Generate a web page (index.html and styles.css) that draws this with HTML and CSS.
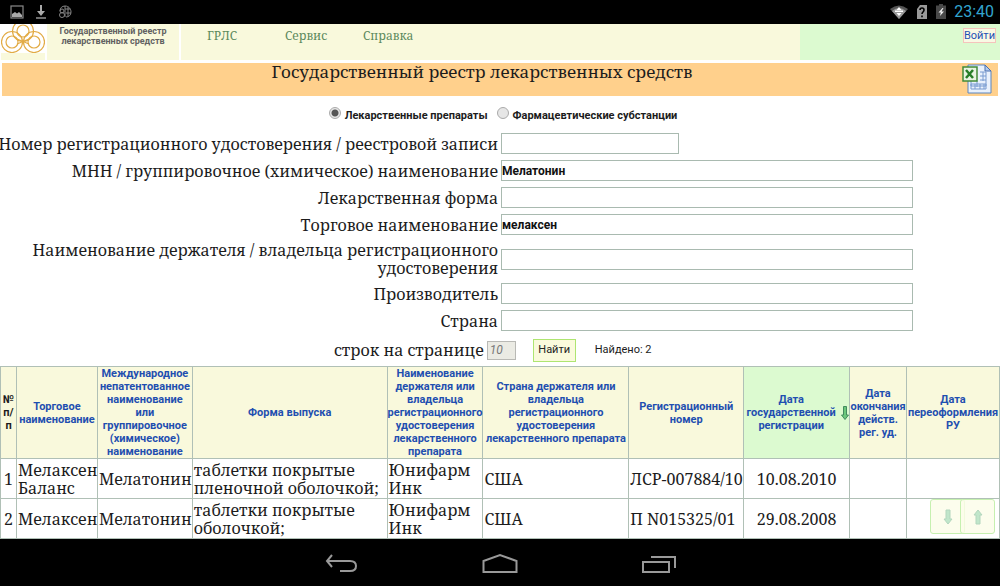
FILE: index.html
```html
<!DOCTYPE html>
<html lang="ru">
<head>
<meta charset="utf-8">
<title>Государственный реестр лекарственных средств</title>
<link rel="stylesheet" href="styles.css">
</head>
<body>
<div class="status-bar">
  <div class="status-group status-left">
    <svg width="14" height="14" viewBox="0 0 14 14"><rect x="1" y="1" width="12" height="12" fill="none" stroke="#8a8a8a" stroke-width="1.2"/><path d="M2 12V9l3-2 2 1.5L9 7l3 3v2z" fill="#aaa"/></svg>
    <svg width="12" height="14" viewBox="0 0 12 14"><path d="M5 0h2v6h3l-4 5-4-5h3z" fill="#aaa"/><path d="M1 13h10" stroke="#aaa" stroke-width="1.3"/></svg>
    <svg width="14" height="14" viewBox="0 0 14 14" fill="none" stroke="#858585"><path d="M2 6C2 3 4 1 7 1c4 0 6 3 6 6s-2 5-5 5M7 1v11M7 4h5M8 8h5M10 2v9"/><circle cx="4" cy="6" r="2"/><circle cx="4" cy="10" r="2.5"/></svg>
  </div>
  <div class="status-group">
    <svg width="20" height="16" viewBox="0 0 20 16"><path d="M1 5Q10-2 19 5L10 15z" fill="#555"/><path d="M3 7Q10 1 17 7L10 15z" fill="#999"/><path d="M10 3l2.500 3h-5zM10 12L7.500 9h5zM6 6.500h8v1.500H6z" fill="#fff"/></svg>
    <svg width="12" height="16" viewBox="0 0 12 16"><path d="M4 1h7v14H1V5z" fill="#999"/><path d="M4 6q0-2 2-2t2 2q0 1-1 2t-1 2M6 11.500v1.800" fill="none" stroke="#000" stroke-width="1.600"/></svg>
    <svg width="12" height="16" viewBox="0 0 12 16"><path d="M4 0h4v1.500h3V15H1V1.500h3z" fill="#484848"/><path d="M7.500 4L3.500 8.500h2.300L5 12l4-4.500H6.500L8.500 4z" fill="#eee"/></svg>
    <time class="clock">23:40</time>
  </div>
</div>

<header class="site-header">
  <div class="logo-cell">
    <svg class="logo" viewBox="0 0 44 29" fill="none" stroke="#e2ab45" stroke-width="1.200"><circle cx="22" cy="7" r="10.500"/><circle cx="22" cy="7" r="6"/><circle cx="11" cy="18" r="10.500"/><circle cx="11" cy="18" r="6"/><circle cx="33" cy="18" r="10.500"/><circle cx="33" cy="18" r="6"/><path d="M16 15l12 5M16 20l12-5"/></svg>
  </div>
  <div class="site-name">Государственный реестр лекарственных средств</div>
  <nav class="menu"><a href="#">ГРЛС</a><a href="#">Сервис</a><a href="#">Справка</a></nav>
  <div class="login-cell"><a class="login" href="#">Войти</a></div>
</header>

<div class="title-bar">
  <h1>Государственный реестр лекарственных средств</h1>
  <button class="excel" type="button" aria-label="Excel">
    <svg width="30" height="30" viewBox="0 0 30 30"><path d="M6 1h17l6 6v22H6z" fill="#e9f1fc" stroke="#5b85c0"/><path d="M23 1v6h6z" fill="#b5cdee" stroke="#4b6fae"/><path d="M18 8h6v14H9v-5M18 12h6M18 16h6M15 17v6M21 8v9M9 20h15v5H9zM13 20v5M18 20v5M22 20v5" fill="none" stroke="#789bd0"/><rect x="1" y="3" width="14" height="14" fill="#e8f3e2" stroke="#438b37" stroke-width="1.500"/><path d="M4 6l7 8M11 6l-7 8" stroke="#277d28" stroke-width="2.500"/></svg>
  </button>
</div>

<main>
  <form class="search">
    <div class="kinds">
      <label><input type="radio" name="kind" checked><span>Лекарственные препараты</span></label>
      <label><input type="radio" name="kind"><span>Фармацевтические субстанции</span></label>
    </div>
    <div class="row"><label class="one-line" for="num">Номер регистрационного удостоверения / реестровой записи</label><input class="field short" id="num" type="text"></div>
    <div class="row"><label for="mnn">МНН / группировочное (химическое) наименование</label><input class="field" id="mnn" type="text" value="Мелатонин"></div>
    <div class="row"><label for="form">Лекарственная форма</label><input class="field" id="form" type="text"></div>
    <div class="row"><label for="trade">Торговое наименование</label><input class="field" id="trade" type="text" value="мелаксен"></div>
    <div class="row tall"><label for="owner">Наименование держателя / владельца регистрационного удостоверения</label><input class="field" id="owner" type="text"></div>
    <div class="row"><label for="maker">Производитель</label><input class="field" id="maker" type="text"></div>
    <div class="row"><label for="country">Страна</label><input class="field" id="country" type="text"></div>
    <div class="actions">
      <label for="rows">строк на странице</label><input class="count" id="rows" type="text" value="10">
      <button class="find" type="button">Найти</button>
      <span class="found">Найдено: 2</span>
    </div>
  </form>

  <div class="results-wrap">
    <table class="results">
      <colgroup><col class="c-num"><col class="c-trade"><col class="c-mnn"><col class="c-form"><col class="c-owner"><col class="c-country"><col class="c-reg"><col class="c-date"><col class="c-end"><col class="c-re"></colgroup>
      <thead>
        <tr>
          <th>№<br>п/<br>п</th>
          <th><a href="#">Торговое наименование</a></th>
          <th><a href="#">Международное непатентованное наименование или группировочное (химическое) наименование</a></th>
          <th><a href="#">Форма выпуска</a></th>
          <th><a href="#">Наименование держателя или владельца регистрационного удостоверения лекарственного препарата</a></th>
          <th><a href="#">Страна держателя или владельца<br>регистрационного удостоверения лекарственного препарата</a></th>
          <th><a href="#">Регистрационный номер</a></th>
          <th class="sorted"><div class="sort"><a href="#">Дата государственной регистрации</a><svg width="8" height="14" viewBox="0 0 8 14"><path d="M2.500 .5h3V9h2L4 13.500.500 9h2z" fill="#6cc77d" stroke="#438b5e"/></svg></div></th>
          <th><a href="#">Дата окончания действ. рег. уд.</a></th>
          <th><a href="#">Дата переоформления РУ</a></th>
        </tr>
      </thead>
      <tbody>
        <tr><td class="mid">1</td><td>Мелаксен Баланс</td><td>Мелатонин</td><td>таблетки покрытые<br>пленочной оболочкой;</td><td>Юнифарм Инк</td><td>США</td><td>ЛСР-007884/10</td><td class="mid">10.08.2010</td><td></td><td></td></tr>
        <tr><td class="mid">2</td><td>Мелаксен</td><td>Мелатонин</td><td>таблетки покрытые<br>оболочкой;</td><td>Юнифарм Инк</td><td>США</td><td>П N015325/01</td><td class="mid">29.08.2008</td><td></td><td></td></tr>
      </tbody>
    </table>
    <div class="scroll-buttons">
      <button type="button" aria-label="Вниз"><svg width="10" height="16" viewBox="0 0 10 16"><path d="M3 1h4v9h2l-4 5-4-5h2z" fill="#c0e6ca" stroke="#b2d6bd"/></svg></button>
      <button type="button" aria-label="Вверх"><svg width="10" height="16" viewBox="0 0 10 16"><path d="M3 15h4V6h2L5 1 1 6h2z" fill="#c0e6ca" stroke="#b2d6bd"/></svg></button>
    </div>
  </div>
</main>

<div class="nav-bar">
  <button type="button" aria-label="Назад"><svg width="36" height="22" viewBox="0 0 36 22"><path d="M9 2L4 8l5 6M4 8h23q6 0 6 5t-6 5H17" fill="none" stroke="#999" stroke-width="2"/></svg></button>
  <button type="button" aria-label="Домой"><svg width="36" height="22" viewBox="0 0 36 22"><path d="M1.500 19V8L18 2l16.500 6v11z" fill="none" stroke="#999" stroke-width="2"/></svg></button>
  <button type="button" aria-label="Недавние"><svg width="36" height="22" viewBox="0 0 36 22"><path d="M2 9h26v10H2zM10 4h24v11" fill="none" stroke="#999" stroke-width="2"/></svg></button>
</div>
</body>
</html>
```
FILE: styles.css
```css
* { box-sizing: border-box; }
body {
  margin: 0;
  min-height: 100vh;
  display: flex;
  flex-direction: column;
  background: #fff;
  color: #1c1c1c;
  font-family: "Noto Serif", "DejaVu Serif Condensed", "DejaVu Serif", serif;
  font-size: 16px;
  line-height: 18px;
}
a { text-decoration: none; }
button { padding: 0; border: 0; background: none; cursor: pointer; }
svg { display: block; flex-shrink: 0; }

.status-bar {
  height: 24px;
  padding: 0 6px 0 10px;
  display: flex;
  justify-content: space-between;
  background: #000;
}
.status-group { display: flex; align-items: center; gap: 7px; }
.status-left { gap: 11px; }
.clock { color: #33a5cf; font: 16px/24px Roboto, sans-serif; }

.site-header {
  height: 36px;
  display: grid;
  grid-template-columns: 44px 132px 1fr 20%;
  column-gap: 2px;
  padding-left: 1px;
}
.site-header > * { background: #f9f9dc; }
.logo { width: 44px; height: 29px; background: #fff; }
.site-name {
  padding: 2px 6px;
  text-align: center;
  font: bold 9px/10px Roboto, sans-serif;
  color: #626262;
}
.menu {
  display: grid;
  grid-template-columns: repeat(3, 78px);
  align-content: start;
  padding: 3px 26px;
  margin-right: -2px;
  font-size: 12px;
}
.menu a { color: #5d8a5d; }
.site-header .login-cell { display: flex; justify-content: flex-end; align-items: flex-start; padding: 4px; background: #dcfad0; }
.login { border: 1px solid #f5c4bc; background: #f9f9e4; color: #2450b4; font: 11px/13px Roboto, sans-serif; }

.title-bar {
  margin: 3px 2px 0;
  height: 33px;
  display: grid;
  grid-template-columns: 1fr 30px;
  padding-right: 6px;
  background: #ffd08c;
}
.title-bar h1 { margin: 0; font-size: 17px; line-height: 18px; font-weight: normal; text-align: center; }
.excel { width: 30px; height: 30px; margin-top: 1px; }

.kinds {
  height: 34px;
  display: flex;
  justify-content: center;
  align-items: center;
  gap: 9px;
  padding: 3px 0 0 6px;
  font: bold 11px/14px Roboto, sans-serif;
}
.kinds label { display: flex; gap: 4px; align-items: flex-end; }
.kinds input {
  appearance: none;
  width: 12px;
  height: 12px;
  margin: 0 0 4px;
  border: 1px solid #aaa;
  border-radius: 50%;
  background: #e6e6e6;
}
.kinds input:checked { background: radial-gradient(circle, #555 0 3px, #e6e6e6 4px); }
.row {
  min-height: 27px;
  display: grid;
  grid-template-columns: minmax(0, 498fr) minmax(0, 499fr);
  column-gap: 3px;
  align-items: center;
}
.row label { text-align: right; justify-self: end; }
.row .one-line { white-space: nowrap; }
.tall { min-height: 42px; }
.tall label { padding-left: 20px; }
.field {
  width: 82.5%;
  height: 21px;
  padding: 0;
  border: 1px solid #a9bab0;
  background: #fff;
  color: #111;
  font: bold 12px/18px Roboto, sans-serif;
}
.short { width: 178px; }
.actions { height: 32px; display: flex; align-items: center; padding-left: 334px; }
.count {
  width: 29px;
  height: 19px;
  margin: 0 17px 0 3px;
  padding: 0 2px;
  border: 1px solid #b9b9b5;
  background: #ebebe4;
  color: #777;
  font: italic 12px/16px Roboto, sans-serif;
}
.find { width: 43px; height: 23px; border: 1px solid #aee571; background: #fafadc; color: #222; font: 11px/20px Roboto, sans-serif; }
.found { margin-left: 19px; font: 11px/18px Roboto, sans-serif; }

.results-wrap { position: relative; }
.results { width: 100%; table-layout: fixed; border-collapse: collapse; }
.results th, .results td { border: 1px solid #b0c0b6; padding: 1px; }
.results th { height: 92px; padding: 0; background: #f9f9dc; font: bold 11px/13px Roboto, sans-serif; }
.results th a { color: #1f4fb0; }
.results th.sorted { background: #dcfad0; }
.sort { display: flex; align-items: center; justify-content: center; gap: 3px; }
.results td { height: 40px; }
.results .mid { text-align: center; }
.c-num { width: 16px; }
.c-trade { width: 8.1%; }
.c-mnn { width: 9.5%; }
.c-form { width: 19.5%; }
.c-owner { width: 9.6%; }
.c-country { width: 14.6%; }
.c-reg { width: 11.5%; }
.c-date { width: 10.6%; }
.c-end { width: 5.7%; }
.scroll-buttons { position: absolute; right: 5px; bottom: 5px; display: flex; }
.scroll-buttons button {
  width: 35px;
  height: 35px;
  display: grid;
  place-items: center;
  border: 1px solid #c6f0b0;
  border-radius: 3px;
  background: rgba(251, 253, 232, .8);
}
.scroll-buttons button + button { margin-left: -5px; }

.nav-bar { flex: 1; min-height: 47px; padding-top: 2px; display: flex; justify-content: center; align-items: center; gap: 123px; background: #000; }
```
